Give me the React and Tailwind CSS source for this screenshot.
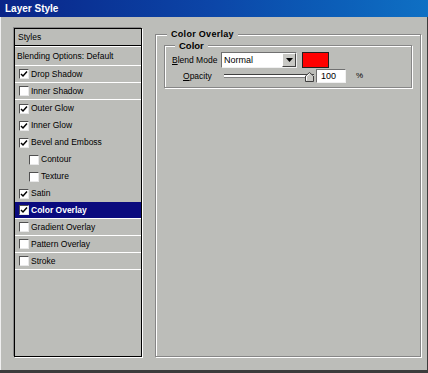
import React from 'react';

const styleRows = [
    { label: 'Drop Shadow', checked: true, line: true },
    { label: 'Inner Shadow', checked: false, line: true },
    { label: 'Outer Glow', checked: true },
    { label: 'Inner Glow', checked: true },
    { label: 'Bevel and Emboss', checked: true },
    { label: 'Contour', checked: false, indent: true },
    { label: 'Texture', checked: false, indent: true },
    { label: 'Satin', checked: true },
    { label: 'Color Overlay', checked: true, selected: true, line: true },
    { label: 'Gradient Overlay', checked: false, line: true },
    { label: 'Pattern Overlay', checked: false, line: true },
    { label: 'Stroke', checked: false, line: true },
];

const CheckBox = ({ checked }) => (
    <div className="w-[10px] h-[10px] shrink-0 bg-white border-t border-l border-[#505050] border-b border-r border-b-[#e8e8e8] border-r-[#e8e8e8] flex items-center justify-center">
        {checked && (
            <svg width="8" height="8" viewBox="0 0 8 8">
                <path d="M1 4 L3 6 L7 1.5" fill="none" stroke="#000" strokeWidth="1.5" />
            </svg>
        )}
    </div>
);

const StyleRow = ({ label, checked, indent, selected, line }) => (
    <div
        className={
            'h-[17px] flex items-center gap-[2px] ' +
            (indent ? 'pl-[14px] ' : 'pl-[4px] ') +
            (selected ? 'bg-[#0a0a7e] text-white font-bold ' : 'text-black ') +
            (line ? 'border-b border-white' : '')
        }
    >
        <CheckBox checked={checked} />
        <span className="leading-none">{label}</span>
    </div>
);

const App = () => {
    return (
        <div className="w-[428px] h-[373px] bg-[#bcbdb9] flex flex-col overflow-hidden shadow-[inset_-1px_-3px_0_#3c3c3c,inset_1px_0_0_#f0f0f0] font-['Liberation_Sans',Arial,sans-serif]">
            {/* Title bar */}
            <div className="h-[17px] shrink-0 flex items-center pl-[5px] bg-gradient-to-r from-[#0a2488] via-[#0c46a8] to-[#0f70c4]">
                <span className="text-white font-bold text-[10px] leading-none">Layer Style</span>
            </div>

            <div className="flex pt-[11px] pl-[14px]">
                {/* Styles list */}
                <div className="w-[128px] h-[329px] border border-black shadow-[-1px_-1px_0_#8a8a8a,1px_1px_0_#ffffff] text-[8.5px]">
                    <div className="h-[17px] flex items-center pl-[3px] border-b border-black">
                        <span className="leading-none">Styles</span>
                    </div>
                    <div className="h-[1px] bg-white" />
                    <div className="h-[19px] flex items-center pl-[2px] border-b border-white">
                        <span className="leading-none">Blending Options: Default</span>
                    </div>
                    {styleRows.map((row, index) => (
                        <StyleRow key={index} {...row} />
                    ))}
                </div>

                {/* Color Overlay group */}
                <div className="relative ml-[13px] mt-[6px] w-[266px] h-[323px] border border-[#868686] shadow-[1px_1px_0_#ffffff,inset_1px_1px_0_#ffffff]">
                    <span className="absolute -top-[6px] left-[11px] px-[4px] bg-[#bcbdb9] text-[9px] font-bold leading-[11px] tracking-[0.3px]">
                        Color Overlay
                    </span>

                    <div className="relative mx-[8px] mt-[10px] h-[43px] border border-[#868686] shadow-[1px_1px_0_#ffffff,inset_1px_1px_0_#ffffff]">
                        <span className="absolute -top-[6px] left-[10px] px-[4px] bg-[#bcbdb9] text-[9.5px] font-bold leading-[11px]">
                            Color
                        </span>

                        {/* Blend mode */}
                        <div className="flex items-center pl-[7px] pt-[6px] text-[8.5px]">
                            <span className="w-[49px] leading-none">
                                <span className="underline">B</span>lend Mode
                            </span>
                            <div className="w-[76px] h-[16px] flex bg-white border-t border-l border-[#707070] border-b border-r border-b-[#f0f0f0] border-r-[#f0f0f0]">
                                <span className="flex-1 pl-[2px] text-[9px] leading-[14px]">Normal</span>
                                <div className="w-[14px] h-full bg-[#c8c8c4] border-t border-l border-white border-b border-r border-b-[#404040] border-r-[#404040] flex items-center justify-center">
                                    <svg width="7" height="4" viewBox="0 0 7 4">
                                        <path d="M0 0 H7 L3.5 4 Z" fill="#000" />
                                    </svg>
                                </div>
                            </div>
                            <div className="ml-[5px] w-[27px] h-[16px] bg-[#ff0000] border border-[#202020]" />
                        </div>

                        {/* Opacity */}
                        <div className="flex items-center pl-[18px] pt-[1px] text-[8.5px]">
                            <span className="w-[41px] leading-none">
                                <span className="underline">O</span>pacity
                            </span>
                            <div className="relative w-[90px] h-[14px] flex items-center">
                                <div className="w-full h-[4px] border-t border-[#404040] bg-white border-b border-b-[#808080]" />
                                <svg className="absolute right-0 top-[3px]" width="9" height="10" viewBox="0 0 9 10">
                                    <path d="M0.5 9.5 V4 L4.5 0.5 L8.5 4 V9.5 Z" fill="#c8c8c4" stroke="#404040" />
                                    <path d="M1.5 8.5 V4.4 L4.5 1.8" fill="none" stroke="#ffffff" />
                                </svg>
                            </div>
                            <div className="ml-[2px] w-[30px] h-[14px] bg-white border-t border-l border-[#707070] border-b border-r border-b-[#f0f0f0] border-r-[#f0f0f0] pl-[4px] text-[9px] leading-[12px]">
                                100
                            </div>
                            <span className="ml-[10px] text-[8px] leading-none">%</span>
                        </div>
                    </div>
                </div>
            </div>
        </div>
    );
};

export default App;
